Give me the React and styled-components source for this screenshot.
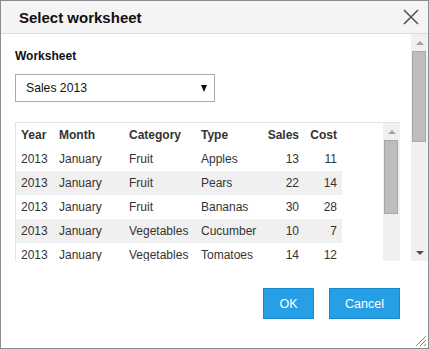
import styled, { createGlobalStyle } from "styled-components";

const GlobalStyle = createGlobalStyle`
  html, body {
    margin: 0;
    padding: 0;
    background: #fff;
    font-family: "Liberation Sans", Arial, sans-serif;
  }
`;

const rows = [
  { year: 2013, month: "January", category: "Fruit", type: "Apples", sales: 13, cost: 11 },
  { year: 2013, month: "January", category: "Fruit", type: "Pears", sales: 22, cost: 14 },
  { year: 2013, month: "January", category: "Fruit", type: "Bananas", sales: 30, cost: 28 },
  { year: 2013, month: "January", category: "Vegetables", type: "Cucumber", sales: 10, cost: 7 },
  { year: 2013, month: "January", category: "Vegetables", type: "Tomatoes", sales: 14, cost: 12 },
];

const Scrollbar = ({ thumb, downActive }) => (
  <Track>
    <ArrowButton>
      <Arrow $dir="up" />
    </ArrowButton>
    <Thumb style={{ height: thumb }} />
    <Spacer />
    <ArrowButton>
      <Arrow $dir="down" $active={downActive} />
    </ArrowButton>
  </Track>
);

const App = () => {
  return (
    <>
      <GlobalStyle />
      <Dialog>
        <TitleBar>
          <Title>Select worksheet</Title>
          <CloseIcon viewBox="0 0 16 16">
            <path d="M1 1 L15 15 M15 1 L1 15" />
          </CloseIcon>
        </TitleBar>

        <Body>
          <Content>
            <Label>Worksheet</Label>
            <Select>
              <span>Sales 2013</span>
              <Caret />
            </Select>

            <TableBox>
              <TableScroll>
                <Table>
                  <colgroup>
                    <col style={{ width: 38 }} />
                    <col style={{ width: 70 }} />
                    <col style={{ width: 72 }} />
                    <col style={{ width: 66 }} />
                    <col style={{ width: 42 }} />
                    <col style={{ width: 38 }} />
                  </colgroup>
                  <thead>
                    <tr>
                      <Th>Year</Th>
                      <Th>Month</Th>
                      <Th>Category</Th>
                      <Th>Type</Th>
                      <Th $num>Sales</Th>
                      <Th $num>Cost</Th>
                    </tr>
                  </thead>
                  <tbody>
                    {rows.map((r, i) => (
                      <Tr key={i} $striped={i % 2 === 1}>
                        <Td>{r.year}</Td>
                        <Td>{r.month}</Td>
                        <Td>{r.category}</Td>
                        <Td>{r.type}</Td>
                        <Td $num>{r.sales}</Td>
                        <Td $num>{r.cost}</Td>
                      </Tr>
                    ))}
                  </tbody>
                </Table>
              </TableScroll>
              <Scrollbar thumb={74} />
            </TableBox>
          </Content>
          <Scrollbar thumb={91} downActive />
        </Body>

        <Footer>
          <Button>OK</Button>
          <Button>Cancel</Button>
        </Footer>

        <Grip viewBox="0 0 14 14">
          <path d="M13 3 L3 13 M13 7 L7 13 M13 11 L11 13" />
        </Grip>
      </Dialog>
    </>
  );
};

const Dialog = styled.div`
  position: relative;
  box-sizing: border-box;
  width: 429px;
  height: 349px;
  border: 1px solid #8c8c8c;
  background: #fff;
  display: flex;
  flex-direction: column;
  overflow: hidden;
`;

const TitleBar = styled.div`
  display: flex;
  align-items: center;
  justify-content: space-between;
  height: 32px;
  padding: 0 9px 0 18px;
  background: #f4f4f4;
  border-bottom: 1px solid #dcdcdc;
  flex-shrink: 0;
`;

const Title = styled.div`
  font-size: 15px;
  font-weight: bold;
  color: #111;
`;

const CloseIcon = styled.svg`
  width: 16px;
  height: 16px;
  stroke: #555;
  stroke-width: 1.6;
  fill: none;
`;

const Body = styled.div`
  display: flex;
  height: 227px;
  flex-shrink: 0;
  overflow: hidden;
`;

const Content = styled.div`
  flex: 1;
  padding: 15px 0 0 14px;
  min-width: 0;
`;

const Label = styled.div`
  font-size: 12px;
  font-weight: bold;
  color: #111;
  line-height: 14px;
`;

const Select = styled.div`
  box-sizing: border-box;
  margin-top: 11px;
  width: 200px;
  height: 28px;
  border: 1px solid #aaa;
  display: flex;
  align-items: center;
  justify-content: space-between;
  padding: 0 7px 0 10px;
  font-size: 12.2px;
  color: #111;
`;

const Caret = styled.span`
  width: 0;
  height: 0;
  border-left: 3.5px solid transparent;
  border-right: 3.5px solid transparent;
  border-top: 7px solid #111;
`;

const TableBox = styled.div`
  margin-top: 20px;
  width: 385px;
  height: 150px;
  box-sizing: border-box;
  border-top: 1px solid #e4e4e4;
  border-left: 1px solid #e4e4e4;
  display: flex;
`;

const TableScroll = styled.div`
  flex: 1;
  overflow: hidden;
`;

const Table = styled.table`
  table-layout: fixed;
  width: 326px;
  border-collapse: collapse;
  font-size: 12px;
  color: #333;
`;

const Th = styled.th`
  height: 24px;
  padding: 0 5px;
  font-weight: bold;
  text-align: ${(p) => (p.$num ? "right" : "left")};
  white-space: nowrap;
`;

const Tr = styled.tr`
  background: ${(p) => (p.$striped ? "#f0f0f0" : "transparent")};
`;

const Td = styled.td`
  height: 24px;
  padding: 0 5px;
  text-align: ${(p) => (p.$num ? "right" : "left")};
  white-space: nowrap;
`;

const Track = styled.div`
  width: 17px;
  flex-shrink: 0;
  background: #f0f0f0;
  display: flex;
  flex-direction: column;
`;

const ArrowButton = styled.div`
  height: 17px;
  display: flex;
  align-items: center;
  justify-content: center;
  flex-shrink: 0;
`;

const Arrow = styled.span`
  width: 0;
  height: 0;
  border-left: 4px solid transparent;
  border-right: 4px solid transparent;
  ${(p) =>
    p.$dir === "up"
      ? "border-bottom: 4px solid #a3a3a3;"
      : `border-top: 4px solid ${p.$active ? "#505050" : "#a3a3a3"};`}
`;

const Thumb = styled.div`
  box-sizing: border-box;
  margin-left: 1px;
  width: 14px;
  background: #bdbdbd;
  border: 1px solid #a8a8a8;
  flex-shrink: 0;
`;

const Spacer = styled.div`
  flex: 1;
`;

const Footer = styled.div`
  flex: 1;
  display: flex;
  justify-content: flex-end;
  align-items: flex-start;
  gap: 15px;
  padding: 27px 28px 0 0;
`;

const Button = styled.button`
  box-sizing: border-box;
  height: 31px;
  padding: 0 15px;
  min-width: 51px;
  background: #279fe6;
  border: 1px solid #1a86cc;
  color: #fff;
  font-family: "Liberation Sans", Arial, sans-serif;
  font-size: 12.5px;
  cursor: pointer;
`;

const Grip = styled.svg`
  position: absolute;
  right: 1px;
  bottom: 1px;
  width: 14px;
  height: 14px;
  stroke: #888;
  stroke-width: 1;
  fill: none;
`;

export default App;
